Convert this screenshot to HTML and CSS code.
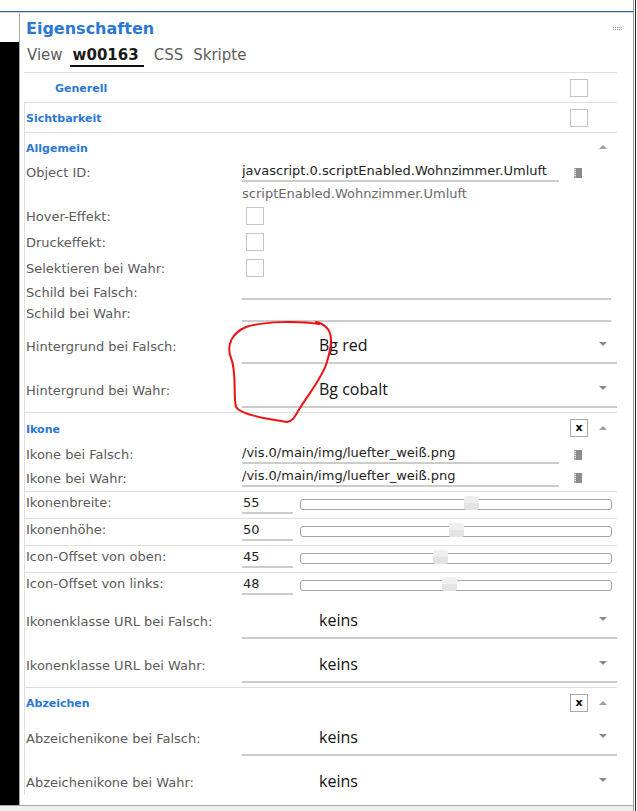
FILE: index.html
```html
<!DOCTYPE html>
<html lang="de">
<head>
<meta charset="utf-8">
<title>Eigenschaften</title>
<link rel="stylesheet" href="styles.css">
</head>
<body>
<div class="page">
  <div class="col">
    <div class="topbar"></div>
    <div class="main">
      <div class="leftbar"></div>
      <div class="panel">
        <div class="ptitle">
          <span class="ttl">Eigenschaften</span>
          <svg class="grip" width="9" height="3" viewBox="0 0 9 3"><g fill="#8a8a8a"><rect x="0" y="0" width="1" height="1"/><rect x="2" y="0" width="1" height="1"/><rect x="4" y="0" width="1" height="1"/><rect x="6" y="0" width="1" height="1"/><rect x="8" y="0" width="1" height="1"/><rect x="0" y="2" width="1" height="1"/><rect x="2" y="2" width="1" height="1"/><rect x="4" y="2" width="1" height="1"/><rect x="6" y="2" width="1" height="1"/><rect x="8" y="2" width="1" height="1"/></g></svg>
        </div>
        <div class="tabs">
          <span class="tab">View</span><span class="tab active">w00163</span><span class="tab">CSS</span><span class="tab">Skripte</span>
        </div>
        <div class="tabsep"></div>
        <div class="scroller">
          <div class="ghead generell"><span class="gname">Generell</span><span class="ctl"><span class="cb"></span><span class="noarrow"></span></span></div>

          <div class="section">
            <div class="ghead"><span class="gname">Sichtbarkeit</span><span class="ctl"><span class="cb"></span><span class="noarrow"></span></span></div>
          </div>

          <div class="section">
            <div class="ghead h28"><span class="gname">Allgemein</span><span class="ctl"><span class="slot"></span><span class="up"></span></span></div>
            <div class="row row-in"><span class="lbl">Object ID:</span><div class="val"><div class="inp w-short">javascript.0.scriptEnabled.Wohnzimmer.Umluft</div><svg class="doc" width="8" height="10" viewBox="0 0 8 10"><rect x="2" y="0" width="6" height="10" fill="#8c8c8c"/><rect x="0" y="0" width="2" height="10" fill="#a8a8a8"/><g fill="#e0e0e0"><rect x="0" y="1" width="2" height="1"/><rect x="0" y="3" width="2" height="1"/><rect x="0" y="5" width="2" height="1"/><rect x="0" y="7" width="2" height="1"/></g></svg></div></div>
            <div class="row row-sub"><span class="lbl"></span><div class="sub">scriptEnabled.Wohnzimmer.Umluft</div></div>
            <div class="row row-check"><span class="lbl">Hover-Effekt:</span><div class="val"><span class="cb cb-val"></span></div></div>
            <div class="row row-check"><span class="lbl">Druckeffekt:</span><div class="val"><span class="cb cb-val"></span></div></div>
            <div class="row row-check"><span class="lbl">Selektieren bei Wahr:</span><div class="val"><span class="cb cb-val"></span></div></div>
            <div class="row row-empty1"><span class="lbl">Schild bei Falsch:</span><div class="val"><div class="inp empty w-full"></div></div></div>
            <div class="row row-empty2"><span class="lbl">Schild bei Wahr:</span><div class="val"><div class="inp empty w-full"></div></div></div>
            <div class="row row-sel"><span class="lbl">Hintergrund bei Falsch:</span><div class="val"><div class="sel"><span class="stxt">Bg red</span><span class="dn"></span></div></div></div>
            <div class="row row-sel"><span class="lbl">Hintergrund bei Wahr:</span><div class="val"><div class="sel"><span class="stxt">Bg cobalt</span><span class="dn"></span></div></div></div>
          </div>

          <div class="section">
            <div class="ghead h30"><span class="gname">Ikone</span><span class="ctl"><span class="xbtn">x</span><span class="up"></span></span></div>
            <div class="row row-in"><span class="lbl">Ikone bei Falsch:</span><div class="val"><div class="inp w-short">/vis.0/main/img/luefter_weiß.png</div><svg class="doc" width="8" height="10" viewBox="0 0 8 10"><rect x="2" y="0" width="6" height="10" fill="#8c8c8c"/><rect x="0" y="0" width="2" height="10" fill="#a8a8a8"/><g fill="#e0e0e0"><rect x="0" y="1" width="2" height="1"/><rect x="0" y="3" width="2" height="1"/><rect x="0" y="5" width="2" height="1"/><rect x="0" y="7" width="2" height="1"/></g></svg></div></div>
            <div class="row row-in2"><span class="lbl">Ikone bei Wahr:</span><div class="val"><div class="inp w-short">/vis.0/main/img/luefter_weiß.png</div><svg class="doc" width="8" height="10" viewBox="0 0 8 10"><rect x="2" y="0" width="6" height="10" fill="#8c8c8c"/><rect x="0" y="0" width="2" height="10" fill="#a8a8a8"/><g fill="#e0e0e0"><rect x="0" y="1" width="2" height="1"/><rect x="0" y="3" width="2" height="1"/><rect x="0" y="5" width="2" height="1"/><rect x="0" y="7" width="2" height="1"/></g></svg></div></div>
            <div class="row row-slider"><span class="lbl">Ikonenbreite:</span><div class="val"><div class="num">55</div><div class="slider"><span class="thumb" style="left:55%"></span></div></div></div>
            <div class="row row-slider"><span class="lbl">Ikonenhöhe:</span><div class="val"><div class="num">50</div><div class="slider"><span class="thumb" style="left:50%"></span></div></div></div>
            <div class="row row-slider"><span class="lbl">Icon-Offset von oben:</span><div class="val"><div class="num">45</div><div class="slider"><span class="thumb" style="left:45%"></span></div></div></div>
            <div class="row row-slider"><span class="lbl">Icon-Offset von links:</span><div class="val"><div class="num">48</div><div class="slider"><span class="thumb" style="left:48%"></span></div></div></div>
            <div class="row row-sel"><span class="lbl">Ikonenklasse URL bei Falsch:</span><div class="val"><div class="sel"><span class="stxt">keins</span><span class="dn"></span></div></div></div>
            <div class="row row-sel"><span class="lbl">Ikonenklasse URL bei Wahr:</span><div class="val"><div class="sel"><span class="stxt">keins</span><span class="dn"></span></div></div></div>
          </div>

          <div class="section">
            <div class="ghead h28p"><span class="gname">Abzeichen</span><span class="ctl"><span class="xbtn">x</span><span class="up"></span></span></div>
            <div class="row row-sel"><span class="lbl">Abzeichenikone bei Falsch:</span><div class="val"><div class="sel"><span class="stxt">keins</span><span class="dn"></span></div></div></div>
            <div class="row row-sel"><span class="lbl">Abzeichenikone bei Wahr:</span><div class="val"><div class="sel"><span class="stxt">keins</span><span class="dn"></span></div></div></div>
          </div>
        </div>
        <div class="bottompad"></div>
      </div>
    </div>
    <div class="footer"></div>
  </div>
  <div class="edge"></div>
</div>
<svg class="scribble" width="637" height="811" viewBox="0 0 637 811">
  <path d="M 319 324 C 300 321, 265 321, 246 327 C 232 333, 226 345, 231 358 C 237 372, 233 395, 236 407 C 240 414, 262 418, 287 422 C 294 421, 296 414, 300 408 C 310 392, 322 378, 327 362 C 331 348, 334 334, 326 327 C 324 325, 321 323, 316 322" fill="none" stroke="#ee1111" stroke-width="2" stroke-linecap="round"/>
</svg>
</body>
</html>
```

FILE: styles.css
```css
* { box-sizing: border-box; margin: 0; padding: 0; }
html, body { width: 637px; height: 811px; overflow: hidden; background: #fff; }
body {
  font-family: "DejaVu Sans", Verdana, sans-serif;
  font-size: 13px;
  color: #5a5a5a;
  position: relative;
}
.page { display: flex; height: 811px; }
.col { width: 633px; display: flex; flex-direction: column; }
.edge {
  width: 4px;
  background: linear-gradient(90deg, #9a9a9a 0 1px, #fff 1px 2px, #2a2a2a 2px 3px, #fff 3px);
}
.topbar {
  height: 13px;
  background: linear-gradient(to bottom, #fff 0 11px, #3264b4 11px 12px, #d2d2d2 12px 13px);
}
.main { height: 792px; display: flex; }
.leftbar { width: 19px; background: linear-gradient(to bottom, #fff 0 29px, #000 29px); }
.panel {
  width: 614px;
  border-left: 1px solid #a8a8a8;
  display: flex;
  flex-direction: column;
}
.ptitle {
  height: 30px;
  display: flex;
  align-items: center;
  justify-content: space-between;
  padding: 0 11px 0 6px;
}
.ttl { font-weight: bold; font-size: 16px; color: #2a78d4; }
.grip { display: block; }
.tabs {
  height: 29px;
  display: flex;
  align-items: flex-start;
  gap: 4px;
  padding-left: 4px;
}
.tab {
  font-size: 15px;
  line-height: 18px;
  padding: 3px 3px 1px;
  border-bottom: 2px solid transparent;
  color: #5c5c5c;
}
.tab.active { font-weight: bold; color: #1a1a1a; border-bottom-color: #111; padding: 3px 5px 1px 3px; margin-right: 3px; }
.tabsep { height: 1px; background: #dedede; margin: 0 16px 0 4px; }
.scroller { height: 722px; overflow: hidden; margin: 0 16px 0 4px; }
.bottompad { flex: 1; }
.footer { height: 6px; border-top: 1px solid #a8a8a8; background: #eeeeee; }

.ghead {
  display: flex;
  align-items: center;
  height: 29px;
}
.ghead.generell { height: 30px; border-bottom: 1px solid #dedede; }
.ghead.h28 { height: 28px; }
.ghead.h30 { height: 30px; }
.ghead.h28p { height: 28px; padding-top: 2px; }
.gname {
  flex: 1;
  font-weight: bold;
  font-size: 11px;
  color: #2a78d4;
  padding-left: 1px;
  padding-top: 2px;
}
.h28p .gname { padding-top: 0; }
.generell .gname { padding-left: 31px; }
.ctl {
  width: 47px;
  display: flex;
  align-items: center;
  padding-right: 10px;
}
.slot { width: 18px; height: 18px; }
.noarrow { width: 8px; }
.cb {
  display: block;
  width: 18px;
  height: 18px;
  border: 1px solid #c4c4c4;
  background: #fff;
}
.xbtn {
  width: 18px;
  height: 18px;
  border: 1px solid #a8a8a8;
  font-weight: bold;
  font-size: 11px;
  line-height: 14px;
  color: #000;
  display: flex;
  align-items: center;
  justify-content: center;
  padding-bottom: 1px;
}
.up {
  width: 0;
  height: 0;
  margin-left: 11px;
  border-left: 4px solid transparent;
  border-right: 4px solid transparent;
  border-bottom: 4px solid #a0a0a0;
}

.section { border-left: 1px solid #dedede; border-bottom: 1px solid #dedede; }
.section:last-child { border-bottom: none; }

.row {
  display: grid;
  grid-template-columns: 217px 375px;
  align-items: center;
}
.lbl { padding-left: 1px; white-space: nowrap; }
.val { display: flex; align-items: flex-start; align-self: stretch; }
.row-in { height: 23px; }
.row-in2 { height: 25px; }
.row-sub { height: 19px; }
.row-check { height: 26px; }
.row-check .val { align-items: center; }
.row-empty1 { height: 22px; }
.row-empty2 { height: 21px; }
.row-sel { height: 44px; }
.row-slider { height: 27px; border-top: 1px solid #dedede; align-items: start; padding-top: 2px; }
.row-slider .lbl { line-height: 18px; }

.inp {
  height: 20px;
  margin-top: 1px;
  line-height: 18px;
  border-bottom: 2px solid #cccccc;
  color: #1e1e1e;
  white-space: nowrap;
  overflow: hidden;
}
.inp.empty { height: 19px; margin-top: 0; }
.w-short { width: 317px; }
.w-full { width: 369px; }
.doc { display: block; margin-left: 15px; margin-top: 7px; }
.sub { color: #6a6a6a; line-height: 19px; }
.cb-val { margin-left: 4px; }

.sel {
  width: 375px;
  height: 36px;
  margin-top: 4px;
  border-bottom: 2px solid #cccccc;
  padding: 0 10px 0 77px;
  display: flex;
  align-items: center;
  justify-content: space-between;
  font-family: "Open Sans", "DejaVu Sans", sans-serif;
  font-size: 16px;
  color: #111;
}
.stxt { line-height: 14px; }
.dn {
  width: 0;
  height: 0;
  margin-top: -3px;
  border-left: 4px solid transparent;
  border-right: 4px solid transparent;
  border-top: 4px solid #8a8a8a;
}

.num {
  width: 51px;
  height: 20px;
  line-height: 18px;
  border-bottom: 2px solid #cccccc;
  color: #1e1e1e;
  padding-left: 1px;
}
.slider {
  position: relative;
  width: 312px;
  height: 11px;
  margin-left: 7px;
  margin-top: 5px;
  border: 1px solid #a6a6a6;
  border-radius: 3px;
  background: #fff;
}
.thumb {
  position: absolute;
  top: -4px;
  width: 15px;
  height: 14px;
  margin-left: -7.5px;
  border-radius: 2px;
  background: linear-gradient(to bottom, #efefef 0 50%, #e3e3e3 50%);
}

.scribble { position: absolute; left: 0; top: 0; pointer-events: none; }
```
